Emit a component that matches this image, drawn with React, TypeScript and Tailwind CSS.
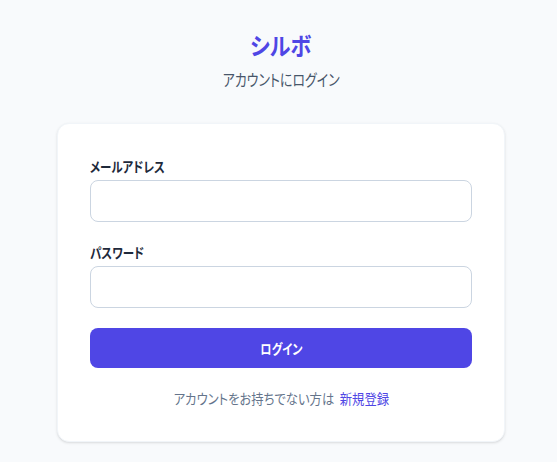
import React from "react";

export default function App() {
  return (
    <div
      className="min-h-[462px] w-full bg-[#f8fafc] flex flex-col items-center pt-[29px] pl-[5px] [font-feature-settings:'palt']"
      style={{ fontFamily: '"Noto Sans CJK JP", "Noto Sans", sans-serif' }}
    >
      <h1 className="text-2xl leading-8 font-bold text-[#4f46e5]">
        <span className="inline-block scale-x-[0.88]">シルボ</span>
      </h1>
      <p className="mt-[6px] text-base leading-6 text-[#475569]">
        <span className="inline-block scale-x-[0.81]">アカウントにログイン</span>
      </p>
      <div className="mt-[32px] w-[448px] bg-white rounded-xl shadow-sm border border-[#f1f5f9] px-8 pt-8 pb-[33px]">
        <div className="flex flex-col">
          <label className="text-sm leading-5 font-semibold text-[#1e293b]">
            <span className="inline-block origin-left scale-x-[0.82]">メールアドレス</span>
          </label>
          <input
            type="email"
            className="mt-1 h-[42px] w-full rounded-lg border border-[#cbd5e1] bg-white px-3 outline-none"
          />
          <label className="mt-5 text-sm leading-5 font-semibold text-[#1e293b]">
            <span className="inline-block origin-left scale-x-[0.82]">パスワード</span>
          </label>
          <input
            type="password"
            className="mt-1 h-[42px] w-full rounded-lg border border-[#cbd5e1] bg-white px-3 outline-none"
          />
          <button className="mt-5 h-10 w-full rounded-lg bg-[#4f46e5] text-white text-sm font-semibold">
            <span className="inline-block scale-x-[0.8]">ログイン</span>
          </button>
          <p className="mt-5 text-center text-sm leading-5 text-[#64748b]">
            <span className="inline-block scale-x-[0.88]">
              アカウントをお持ちでない方は&nbsp;&nbsp;<a className="text-[#4f46e5]">新規登録</a>
            </span>
          </p>
        </div>
      </div>
    </div>
  );
}
